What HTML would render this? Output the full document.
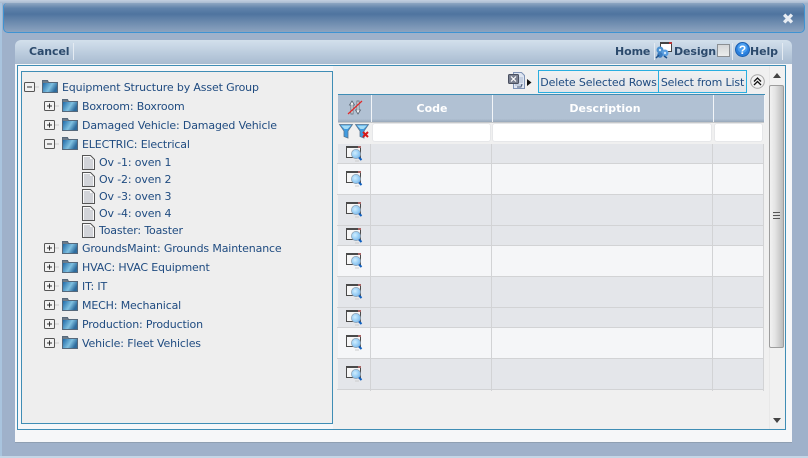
<!DOCTYPE html>
<html><head><meta charset="utf-8">
<style>
html,body{margin:0;padding:0;width:808px;height:458px;overflow:hidden;background:#9fb1ca}
body{position:relative;font-family:"DejaVu Sans","Liberation Sans",sans-serif;font-size:11px}
div,span,svg{position:absolute;display:block}
svg{overflow:visible}
svg:not([width]){width:17px;height:16px}
.t{white-space:nowrap;color:#1f4b80;font-size:11px;line-height:14px;letter-spacing:-.15px;margin-top:1px}
.b{white-space:nowrap;color:#2c4a6c;font-weight:bold;font-size:11px;line-height:14px;letter-spacing:-.1px}
.h{white-space:nowrap;color:#fff;font-weight:bold;font-size:11px;line-height:14px;text-align:center;margin-top:1px}
.r{left:338px;width:426px}
.g{background:#e4e6ea}.w{background:#f5f6f8}
.l{left:337px;width:427px;height:1px;background:#d2d3d5}
.v{width:1px;background:#d2d3d5;top:144px;height:247px}
.i{background:#fff;top:124px;height:17px;border-radius:2px;box-shadow:0 0 0 1px #e6e7e9}
.btn{top:70px;height:21px;border:1px solid #29aee0;background:linear-gradient(#f0f1f2,#e2e5e9);color:#1f4b80;font-size:11px;line-height:23px;text-align:center;white-space:nowrap;letter-spacing:-.15px}
</style></head><body>
<svg width="0" height="0" style="position:absolute">
<defs>
<linearGradient id="fg" x1="0" y1="0" x2="1" y2="0.4"><stop offset="0" stop-color="#1f6aa8"/><stop offset=".6" stop-color="#7fc0e0"/><stop offset="1" stop-color="#2f6d9e"/></linearGradient>
<radialGradient id="mg" cx=".4" cy=".4" r=".7"><stop offset="0" stop-color="#cfeeff"/><stop offset="1" stop-color="#6fb4ec"/></radialGradient>
<symbol id="folder" viewBox="0 0 16 14" width="16" height="14"><path d="M.5 13.5V1.5h5l1 2h9v10z" fill="#6a7a88" stroke="#56687a"/><rect x="1" y="4" width="14" height="9" fill="url(#fg)"/></symbol>
<symbol id="plus" viewBox="0 0 16 11" width="16" height="11"><rect x=".5" y=".5" width="10" height="9" rx="1" fill="#f2f2f2" stroke="#555"/><path d="M3 5h5M5.500 2.500v5" stroke="#333"/><path d="M11 5h4" stroke="#ccc"/></symbol>
<symbol id="minus" viewBox="0 0 16 11" width="16" height="11"><rect x=".5" y=".5" width="10" height="9" rx="1" fill="#f2f2f2" stroke="#555"/><path d="M3 5h5" stroke="#333"/><path d="M11 5h4" stroke="#ccc"/></symbol>
<symbol id="file" viewBox="0 0 13 15" width="13" height="15"><path d="M.5.5h8l4 4v10H.5z" fill="#fafafa" stroke="#555"/><path d="M2 3h6M2 5h9M2 7h9M2 9h9M2 11h9M2 13h9" stroke="#a9aeb8"/></symbol>
<symbol id="mag" viewBox="0 0 17 16" width="17" height="16"><rect x=".5" y=".5" width="14" height="11" fill="#f7f7f7" stroke="#4a4a4a"/><rect x="0" y="0" width="15" height="2" fill="#4a4a4a"/><rect x="12" y="0" width="3" height="2" fill="#a66"/><circle cx="10" cy="8" r="4.600" fill="url(#mg)" stroke="#8fa0b0" stroke-width=".7"/><path d="M13 11.500l2.500 2.500" stroke="#1060c0" stroke-width="2"/><path d="M9 15h4" stroke="#ccc"/></symbol>
</defs></svg>

<!-- outer -->
<div style="left:0;top:0;width:808px;height:3px;background:linear-gradient(#c4d0e0,#a9bad0)"></div>
<div style="left:0;top:3px;width:2px;height:453px;background:#a9c4de"></div>
<div style="left:0;top:456px;width:808px;height:2px;background:#c4d6e6"></div>
<div style="left:3px;top:3px;width:800px;height:29px;border:1px solid #3f93d2;border-top:0;border-radius:4px 4px 5px 5px;background:linear-gradient(#8fa6c2 0,#5f82aa 18%,#4f749f 38%,#6686ab 60%,#8ca3bf 100%)"></div>
<div style="left:780px;top:11px;width:16px;text-align:center;color:#e8edf3;font-size:15px;line-height:16px;font-weight:bold;font-family:'DejaVu Sans',sans-serif">✖</div>

<!-- content -->
<div style="left:15px;top:64px;width:777px;height:378px;background:#f6f7f9;border-bottom:1px solid #8f9fb2"></div>
<div style="left:15px;top:40px;width:777px;height:24px;border-radius:6px 6px 0 0;background:linear-gradient(#d3e0ec,#b9cadc 60%,#a8bbd0)"></div>
<div class="b" style="left:29px;top:45px">Cancel</div>
<div style="left:73px;top:43px;width:1px;height:17px;background:#e4ebf2"></div>
<div class="b" style="left:615px;top:45px">Home</div>
<div style="left:654px;top:43px;width:1px;height:17px;background:#e4ebf2"></div>
<svg style="left:655px;top:42px" width="18" height="17" viewBox="0 0 18 17"><rect x="5.500" y=".5" width="11" height="9" fill="#fff" stroke="#444"/><rect x="5" y="0" width="12" height="2" fill="#444"/><rect x="14" y="0" width="3" height="2" fill="#b33"/><circle cx="5" cy="8" r="3.500" fill="#4a90d0"/><circle cx="10" cy="11" r="3.500" fill="#5a9ee0"/><circle cx="5" cy="13" r="2.800" fill="#3a7cc0"/><circle cx="5" cy="8" r="1.200" fill="#cfe6f8"/><circle cx="10" cy="11" r="1.200" fill="#cfe6f8"/><path d="M1 16l3-3M9 14l3 2" stroke="#1e4f86" stroke-width="1.500"/></svg>
<div class="b" style="left:674px;top:45px">Design</div>
<div style="left:717px;top:44px;width:11px;height:11px;background:linear-gradient(#d4d6d8,#eceded);border:1px solid #8b8f93"></div>
<div style="left:732px;top:43px;width:1px;height:17px;background:#e4ebf2"></div>
<svg style="left:735px;top:42px" width="15" height="15" viewBox="0 0 15 15"><circle cx="7.500" cy="7.500" r="7" fill="#2a7fdc" stroke="#1c5fb0"/><circle cx="7.500" cy="6" r="5" fill="#4c9ff0"/><text x="7.500" y="12" text-anchor="middle" font-family="Liberation Sans" font-weight="bold" font-size="12" fill="#fff">?</text></svg>
<div class="b" style="left:750px;top:45px">Help</div>
<div style="left:782px;top:43px;width:1px;height:17px;background:#e4ebf2"></div>

<!-- frame -->
<div style="left:17px;top:65px;width:767px;height:363px;border:1px solid #3f8db5"></div>
<div style="left:333px;top:66px;width:451px;height:363px;background:#f0f0f0"></div>

<!-- tree -->
<div style="left:21px;top:71px;width:310px;height:351px;border:1px solid #3f8db5;background:#eeeeee"></div>

<svg style="left:24px;top:82px"><use href="#minus"/></svg>
<svg style="left:42px;top:79px"><use href="#folder"/></svg>
<div class="t" style="left:62px;top:80px">Equipment Structure by Asset Group</div>

<svg style="left:44px;top:101px"><use href="#plus"/></svg>
<svg style="left:62px;top:98px"><use href="#folder"/></svg>
<div class="t" style="left:82px;top:99px">Boxroom: Boxroom</div>

<svg style="left:44px;top:120px"><use href="#plus"/></svg>
<svg style="left:62px;top:117px"><use href="#folder"/></svg>
<div class="t" style="left:82px;top:118px">Damaged Vehicle: Damaged Vehicle</div>

<svg style="left:44px;top:139px"><use href="#minus"/></svg>
<svg style="left:62px;top:136px"><use href="#folder"/></svg>
<div class="t" style="left:82px;top:137px">ELECTRIC: Electrical</div>

<svg style="left:82px;top:155px"><use href="#file"/></svg>
<div class="t" style="left:99px;top:155px">Ov -1: oven 1</div>
<svg style="left:82px;top:172px"><use href="#file"/></svg>
<div class="t" style="left:99px;top:172px">Ov -2: oven 2</div>
<svg style="left:82px;top:189px"><use href="#file"/></svg>
<div class="t" style="left:99px;top:189px">Ov -3: oven 3</div>
<svg style="left:82px;top:206px"><use href="#file"/></svg>
<div class="t" style="left:99px;top:206px">Ov -4: oven 4</div>
<svg style="left:82px;top:223px"><use href="#file"/></svg>
<div class="t" style="left:99px;top:223px">Toaster: Toaster</div>

<svg style="left:44px;top:243px"><use href="#plus"/></svg>
<svg style="left:62px;top:240px"><use href="#folder"/></svg>
<div class="t" style="left:82px;top:241px">GroundsMaint: Grounds Maintenance</div>

<svg style="left:44px;top:262px"><use href="#plus"/></svg>
<svg style="left:62px;top:259px"><use href="#folder"/></svg>
<div class="t" style="left:82px;top:260px">HVAC: HVAC Equipment</div>

<svg style="left:44px;top:281px"><use href="#plus"/></svg>
<svg style="left:62px;top:278px"><use href="#folder"/></svg>
<div class="t" style="left:82px;top:279px">IT: IT</div>

<svg style="left:44px;top:300px"><use href="#plus"/></svg>
<svg style="left:62px;top:297px"><use href="#folder"/></svg>
<div class="t" style="left:82px;top:298px">MECH: Mechanical</div>

<svg style="left:44px;top:319px"><use href="#plus"/></svg>
<svg style="left:62px;top:316px"><use href="#folder"/></svg>
<div class="t" style="left:82px;top:317px">Production: Production</div>

<svg style="left:44px;top:338px"><use href="#plus"/></svg>
<svg style="left:62px;top:335px"><use href="#folder"/></svg>
<div class="t" style="left:82px;top:336px">Vehicle: Fleet Vehicles</div>

<!-- grid toolbar -->
<svg style="left:508px;top:72px" width="17" height="18" viewBox="0 0 17 18"><path d="M5.500 .5h8l3 3v13h-11z" fill="#dfe6f2" stroke="#7f93b6"/><path d="M7 13h8M11 6h4M11 8h4M11 10h4" stroke="#aab8d0"/><rect x=".5" y="2.500" width="10" height="9" rx="1" fill="#7a8090" stroke="#4a5060"/><path d="M3 4.500l5 5M8 4.500l-5 5" stroke="#fff" stroke-width="1.200"/><path d="M9 15h4l1-3" stroke="#4a5a78" fill="none"/></svg>
<svg style="left:527px;top:79px" width="5" height="7"><path d="M0 0l4.500 3.500L0 7z" fill="#111"/></svg>
<div class="btn" style="left:538px;width:119px">Delete Selected Rows</div>
<div class="btn" style="left:658px;width:87px">Select from List</div>
<svg style="left:750px;top:74px" width="15" height="15" viewBox="0 0 15 15"><circle cx="7.500" cy="7.500" r="6.800" fill="#f2f2f2" stroke="#a8a8a8"/><path d="M4 7.500l3.500-3.500L11 7.500M4 11l3.500-3.500L11 11" fill="none" stroke="#111" stroke-width="1.300"/></svg>

<!-- grid header -->
<div style="left:338px;top:94px;width:427px;height:1px;background:#3f8db5"></div>
<div style="left:338px;top:95px;width:426px;height:27px;background:linear-gradient(#b1c1d3 0,#b1c1d3 88%,#98a8ba 100%)"></div>
<div style="left:338px;top:122px;width:426px;height:1px;background:#c6c8ca"></div>
<div style="left:371px;top:95px;width:1px;height:27px;background:#f2f5f8"></div>
<div style="left:492px;top:95px;width:1px;height:27px;background:#f2f5f8"></div>
<div style="left:713px;top:95px;width:1px;height:27px;background:#f2f5f8"></div>
<div style="left:764px;top:95px;width:1px;height:27px;background:#f2f5f8"></div>
<div class="h" style="left:372px;top:101px;width:120px">Code</div>
<div class="h" style="left:495px;top:101px;width:220px">Description</div>
<svg style="left:347px;top:99px" width="16" height="17" viewBox="0 0 16 17"><path d="M5 2L2.500 6h1.500v9h2V6h1.500zM11 15l2.500-4H12V2h-2v9H8.500z" fill="#f4f6f8" stroke="#5a6472" stroke-width=".8"/><path d="M1 15L15 2" stroke="#e02828" stroke-width="1.200"/></svg>

<!-- filter row -->
<svg style="left:339px;top:124px" width="15" height="15" viewBox="0 0 15 15"><path d="M.5.500h13L9 7v7l-4-1.500V7z" fill="#3f9be0" stroke="#5a7690" stroke-width=".8"/><path d="M2 1.500h10L8.500 5h-3z" fill="#a5dcf6"/></svg>
<svg style="left:355px;top:124px" width="15" height="15" viewBox="0 0 15 15"><path d="M.5.500h13L9 7v7l-4-1.500V7z" fill="#3f9be0" stroke="#5a7690" stroke-width=".8"/><path d="M2 1.500h10L8.500 5h-3z" fill="#a5dcf6"/><path d="M8 8l5 5M13 8l-5 5" stroke="#d81818" stroke-width="2"/></svg>
<div class="i" style="left:373px;width:117px"></div>
<div class="i" style="left:493px;width:218px"></div>
<div class="i" style="left:715px;width:47px"></div>

<!-- rows -->
<div class="r g" style="top:144px;height:20px"></div>
<div class="r w" style="top:164px;height:30px"></div>
<div class="r g" style="top:194px;height:51px"></div>
<div class="r w" style="top:245px;height:31px"></div>
<div class="r g" style="top:276px;height:51px"></div>
<div class="r w" style="top:327px;height:31px"></div>
<div class="r g" style="top:358px;height:31px"></div>
<div class="l" style="top:163px"></div>
<div class="l" style="top:194px"></div>
<div class="l" style="top:225px"></div>
<div class="l" style="top:245px"></div>
<div class="l" style="top:276px"></div>
<div class="l" style="top:307px"></div>
<div class="l" style="top:327px"></div>
<div class="l" style="top:358px"></div>
<div class="l" style="top:389px"></div>
<div class="v" style="left:370px"></div>
<div class="v" style="left:491px"></div>
<div class="v" style="left:712px"></div>
<div class="v" style="left:763px"></div>

<svg style="left:346px;top:146px"><use href="#mag"/></svg>
<svg style="left:346px;top:171px"><use href="#mag"/></svg>
<svg style="left:346px;top:202px"><use href="#mag"/></svg>
<svg style="left:346px;top:228px"><use href="#mag"/></svg>
<svg style="left:346px;top:253px"><use href="#mag"/></svg>
<svg style="left:346px;top:284px"><use href="#mag"/></svg>
<svg style="left:346px;top:310px"><use href="#mag"/></svg>
<svg style="left:346px;top:335px"><use href="#mag"/></svg>
<svg style="left:346px;top:366px"><use href="#mag"/></svg>

<!-- scrollbar -->
<div style="left:769px;top:66px;width:15px;height:363px;background:#f1f1f1;border-left:1px solid #e8e8e8"></div>
<svg style="left:773px;top:73px" width="9" height="5"><path d="M0 5L4 0l4 5z" fill="#444"/></svg>
<svg style="left:773px;top:418px" width="9" height="5"><path d="M0 0h8L4 5z" fill="#444"/></svg>
<div style="left:769px;top:85px;width:13px;height:261px;border:1px solid #9d9d9d;border-radius:2px;background:linear-gradient(90deg,#f2f2f2,#e4e4e4 40%,#bcbcbc)"></div>
<div style="left:773px;top:212px;width:7px;height:1px;background:#555;box-shadow:0 1px 0 #ddd,0 3px 0 #555,0 4px 0 #ddd,0 6px 0 #555"></div>
</body></html>
